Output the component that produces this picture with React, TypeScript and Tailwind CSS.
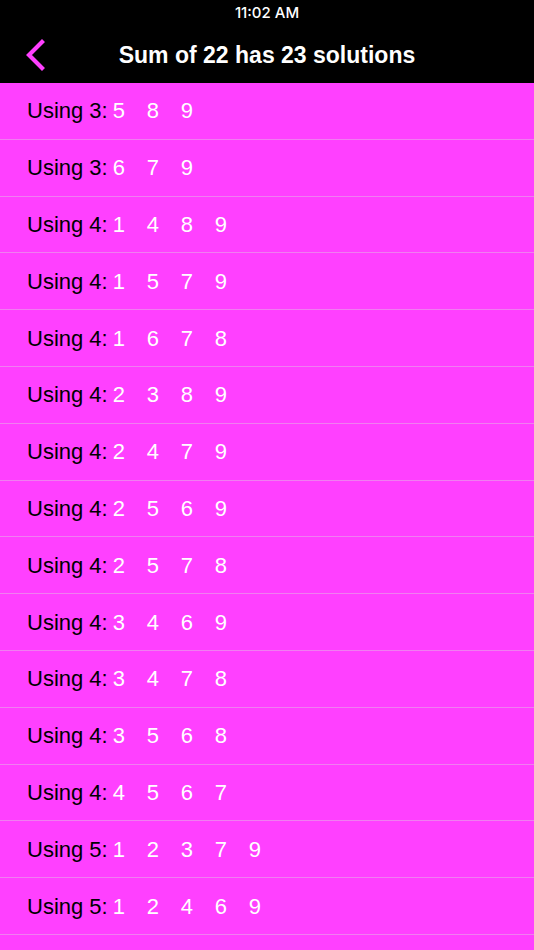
const rows: [number, number[]][] = [
  [3, [5, 8, 9]],
  [3, [6, 7, 9]],
  [4, [1, 4, 8, 9]],
  [4, [1, 5, 7, 9]],
  [4, [1, 6, 7, 8]],
  [4, [2, 3, 8, 9]],
  [4, [2, 4, 7, 9]],
  [4, [2, 5, 6, 9]],
  [4, [2, 5, 7, 8]],
  [4, [3, 4, 6, 9]],
  [4, [3, 4, 7, 8]],
  [4, [3, 5, 6, 8]],
  [4, [4, 5, 6, 7]],
  [5, [1, 2, 3, 7, 9]],
  [5, [1, 2, 4, 6, 9]],
];

export default function App() {
  return (
    <div className="h-[950px] w-[534px] overflow-hidden bg-[#ff40ff] font-['Liberation_Sans',Arial,sans-serif]">
      <div className="h-[83px] bg-black">
        <div className="flex h-[27px] items-center justify-center font-['Inter',sans-serif] text-[15px] font-medium text-white">
          11:02 AM
        </div>
        <div className="relative flex h-[56px] items-center justify-center">
          <svg
            className="absolute left-[25px] top-[12px]"
            width="22"
            height="32"
            viewBox="0 0 22 32"
            fill="none"
          >
            <path
              d="M17 3 L4 16 L17 29"
              stroke="#ff40ff"
              strokeWidth="4.2"
              strokeLinecap="square"
            />
          </svg>
          <h1 className="text-[23px] font-bold text-white">Sum of 22 has 23 solutions</h1>
        </div>
      </div>
      <ul>
        {rows.map(([n, nums], i) => (
          <li
            key={i}
            className="flex h-[56.8px] items-center border-b border-[#f07ef0] pl-[27px] text-[22px]"
          >
            <span className="mr-[5px] text-black">Using {n}:</span>
            {nums.map((d, j) => (
              <span key={j} className="inline-block w-[34px] text-white">
                {d}
              </span>
            ))}
          </li>
        ))}
      </ul>
    </div>
  );
}
